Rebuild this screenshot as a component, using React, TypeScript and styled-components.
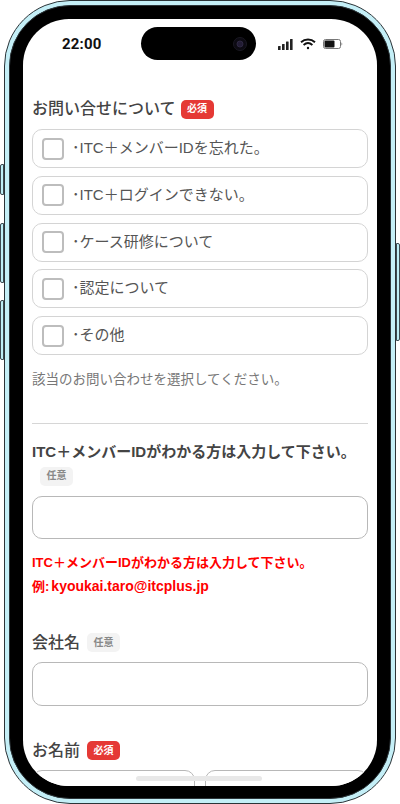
import styled, { createGlobalStyle } from 'styled-components'

const GlobalStyle = createGlobalStyle`
    html, body {
        margin: 0;
        padding: 0;
        background: #fff;
    }

    body {
        font-family: "Liberation Sans", "Noto Sans CJK JP", sans-serif;
    }
`

const Page = styled.div`
    position: relative;
    width: 400px;
    height: 804px;
    padding-left: 4px;
    box-sizing: border-box;
    overflow: hidden;
`

const SideButton = styled.span<{ $side: 'left' | 'right'; $top: number; $height: number }>`
    position: absolute;
    top: ${({ $top }) => $top}px;
    ${({ $side }) => $side}: 0;
    width: 4px;
    height: ${({ $height }) => $height}px;
    box-sizing: border-box;
    background: #bdeef6;
    border: 1px solid #3c4a50;
    border-radius: ${({ $side }) => ($side === 'left' ? '2px 0 0 2px' : '0 2px 2px 0')};
`

const Shell = styled.div`
    width: 392px;
    height: 804px;
    box-sizing: border-box;
    padding: 4px;
    background: #c4eff7;
    border: 1px solid #2c3438;
    border-radius: 66px;
`

const Bezel = styled.div`
    height: 100%;
    box-sizing: border-box;
    padding: 13px 13px 12px 13px;
    background: #000;
    border: 1px solid #2c3438;
    border-radius: 61px;
`

const Screen = styled.main`
    position: relative;
    height: 100%;
    overflow: hidden;
    background: #fff;
    border-radius: 46px;
`

const StatusBar = styled.header`
    display: flex;
    align-items: center;
    justify-content: space-between;
    height: 50px;
    padding: 0 34px 0 39px;
    box-sizing: border-box;
    color: #111;
`

const Clock = styled.span`
    font-family: Roboto, sans-serif;
    font-size: 15px;
    font-weight: 700;
    letter-spacing: 0.2px;
`

const Island = styled.div`
    position: absolute;
    top: 8px;
    left: 118px;
    display: flex;
    align-items: center;
    justify-content: flex-end;
    width: 115px;
    height: 33px;
    padding-right: 9px;
    box-sizing: border-box;
    background: #000;
    border-radius: 17px;
`

const StatusIcons = styled.div`
    display: flex;
    align-items: center;
    gap: 7px;
`

const Form = styled.form`
    padding: 30px 9px 0;
    color: #444;
`

const Section = styled.section`
    display: flex;
    flex-direction: column;
`

const Label = styled.div<{ $size?: number; $gap?: number }>`
    display: flex;
    align-items: center;
    flex-wrap: wrap;
    gap: ${({ $gap }) => $gap ?? 7}px;
    font-size: ${({ $size }) => $size ?? 16}px;
    font-weight: 500;
    line-height: 20px;
    color: #444;
`

const Badge = styled.span<{ $required?: boolean }>`
    display: inline-flex;
    align-items: center;
    justify-content: center;
    width: 33px;
    height: 19px;
    border-radius: 5px;
    font-size: 10px;
    font-weight: 700;
    line-height: 1;
    background: ${({ $required }) => ($required ? '#e53935' : '#f3f3f3')};
    color: ${({ $required }) => ($required ? '#fff' : '#888')};
`

const OptionList = styled.div`
    display: flex;
    flex-direction: column;
    gap: 7.8px;
    margin-top: 10px;
`

const Option = styled.label`
    display: flex;
    align-items: center;
    gap: 8px;
    height: 39px;
    padding-left: 9px;
    box-sizing: border-box;
    border: 1px solid #d4d4d4;
    border-radius: 10px;
    font-size: 15px;
    color: #555;
`

const OptionText = styled.span`
    margin-bottom: 4px;
`

const CheckBox = styled.span`
    width: 22px;
    height: 22px;
    box-sizing: border-box;
    border: 2px solid #bdbdbd;
    border-radius: 4px;
    background: #fff;
`

const Hint = styled.p`
    margin: 15.8px 0 0;
    font-size: 13.5px;
    line-height: 18px;
    color: #777;
`

const Divider = styled.hr`
    margin: 34px 0 0;
    border: 0;
    border-top: 1px solid #d6d6d6;
`

const IdLabel = styled(Label)`
    margin-top: 18px;
    row-gap: 5px;
    font-weight: 700;
`

const OptionalBadge = styled(Badge)`
    margin-left: 8px;
`

const TextInput = styled.input`
    display: block;
    width: 100%;
    height: 43px;
    margin-top: 10px;
    box-sizing: border-box;
    border: 1px solid #b8b8b8;
    border-radius: 10px;
    background: #fff;
    outline: none;
`

const Note = styled.p`
    margin: 12px 0 0;
    font-size: 13px;
    font-weight: 700;
    line-height: 24px;
    color: #ff0000;
`

const Email = styled.span`
    margin-left: 2px;
    font-size: 14px;
    line-height: 1;
`

const FieldSection = styled(Section)<{ $top: number }>`
    margin-top: ${({ $top }) => $top}px;
`

const FieldInput = styled(TextInput)`
    height: 44px;
    margin-top: 9px;
`

const NameRow = styled.div`
    display: flex;
    gap: 10px;
    margin-top: 9px;
`

const NameInput = styled(TextInput)`
    flex: 1;
    min-width: 0;
    margin-top: 0;
`

const HomeBar = styled.div`
    position: absolute;
    left: 113px;
    bottom: 5px;
    width: 126px;
    height: 5px;
    background: #e8e8e8;
    border-radius: 3px;
`

const options = [
    '･ITC＋メンバーIDを忘れた。',
    '･ITC＋ログインできない。',
    '･ケース研修について',
    '･認定について',
    '･その他',
]

const App = () => {
    return (
        <>
            <GlobalStyle />
            <Page>
                <SideButton $side='left' $top={164} $height={31} />
                <SideButton $side='left' $top={223} $height={60} />
                <SideButton $side='left' $top={300} $height={60} />
                <SideButton $side='right' $top={243} $height={98} />
                <Shell>
                    <Bezel>
                        <Screen>
                            <StatusBar>
                                <Clock>22:00</Clock>
                                <Island>
                                    <svg width='14' height='14' viewBox='0 0 14 14'>
                                        <circle cx='7' cy='7' r='6.5' fill='#0c0a12' stroke='#1a1822' />
                                        <circle cx='7' cy='7' r='3' fill='#221c34' stroke='#2e2842' />
                                    </svg>
                                </Island>
                                <StatusIcons>
                                    <svg width='15' height='11' viewBox='0 0 15 11' fill='#222'>
                                        <rect x='0' y='7' width='2.6' height='4' rx='0.5' />
                                        <rect x='4' y='5' width='2.6' height='6' rx='0.5' />
                                        <rect x='8' y='2.5' width='2.6' height='8.5' rx='0.5' />
                                        <rect x='12' y='0' width='2.6' height='11' rx='0.5' />
                                    </svg>
                                    <svg width='16' height='12' viewBox='0 0 16 12' fill='none' stroke='#111' strokeWidth='2'>
                                        <path d='M1 4.2C5 .6 11 .6 15 4.2' />
                                        <path d='M3.6 6.9c2.6-2.2 6.2-2.2 8.8 0' />
                                        <circle cx='8' cy='10' r='1.2' fill='#111' stroke='none' />
                                    </svg>
                                    <svg width='20' height='10' viewBox='0 0 20 10'>
                                        <rect x='0.5' y='0.5' width='17' height='9' rx='2' fill='#fff' stroke='#777' />
                                        <rect x='1.5' y='1.5' width='10' height='7' rx='1' fill='#111' />
                                        <path d='M18.5 3.5c1 .3 1 2.7 0 3z' fill='#777' />
                                    </svg>
                                </StatusIcons>
                            </StatusBar>
                            <Form>
                                <Section>
                                    <Label $gap={5}>
                                        お問い合せについて
                                        <Badge $required>必須</Badge>
                                    </Label>
                                    <OptionList>
                                        {options.map((option) => (
                                            <Option key={option}>
                                                <CheckBox />
                                                <OptionText>{option}</OptionText>
                                            </Option>
                                        ))}
                                    </OptionList>
                                    <Hint>該当のお問い合わせを選択してください。</Hint>
                                </Section>
                                <Divider />
                                <Section>
                                    <IdLabel $size={15}>
                                        ITC＋メンバーIDがわかる方は入力して下さい。
                                        <OptionalBadge>任意</OptionalBadge>
                                    </IdLabel>
                                    <TextInput type='text' />
                                    <Note>
                                        ITC＋メンバーIDがわかる方は入力して下さい。
                                        <br />
                                        例:<Email>kyoukai.taro@itcplus.jp</Email>
                                    </Note>
                                </Section>
                                <FieldSection $top={34}>
                                    <Label>
                                        会社名
                                        <Badge>任意</Badge>
                                    </Label>
                                    <FieldInput type='text' />
                                </FieldSection>
                                <FieldSection $top={35}>
                                    <Label>
                                        お名前
                                        <Badge $required>必須</Badge>
                                    </Label>
                                    <NameRow>
                                        <NameInput type='text' />
                                        <NameInput type='text' />
                                    </NameRow>
                                </FieldSection>
                            </Form>
                            <HomeBar />
                        </Screen>
                    </Bezel>
                </Shell>
            </Page>
        </>
    )
}

export default App
